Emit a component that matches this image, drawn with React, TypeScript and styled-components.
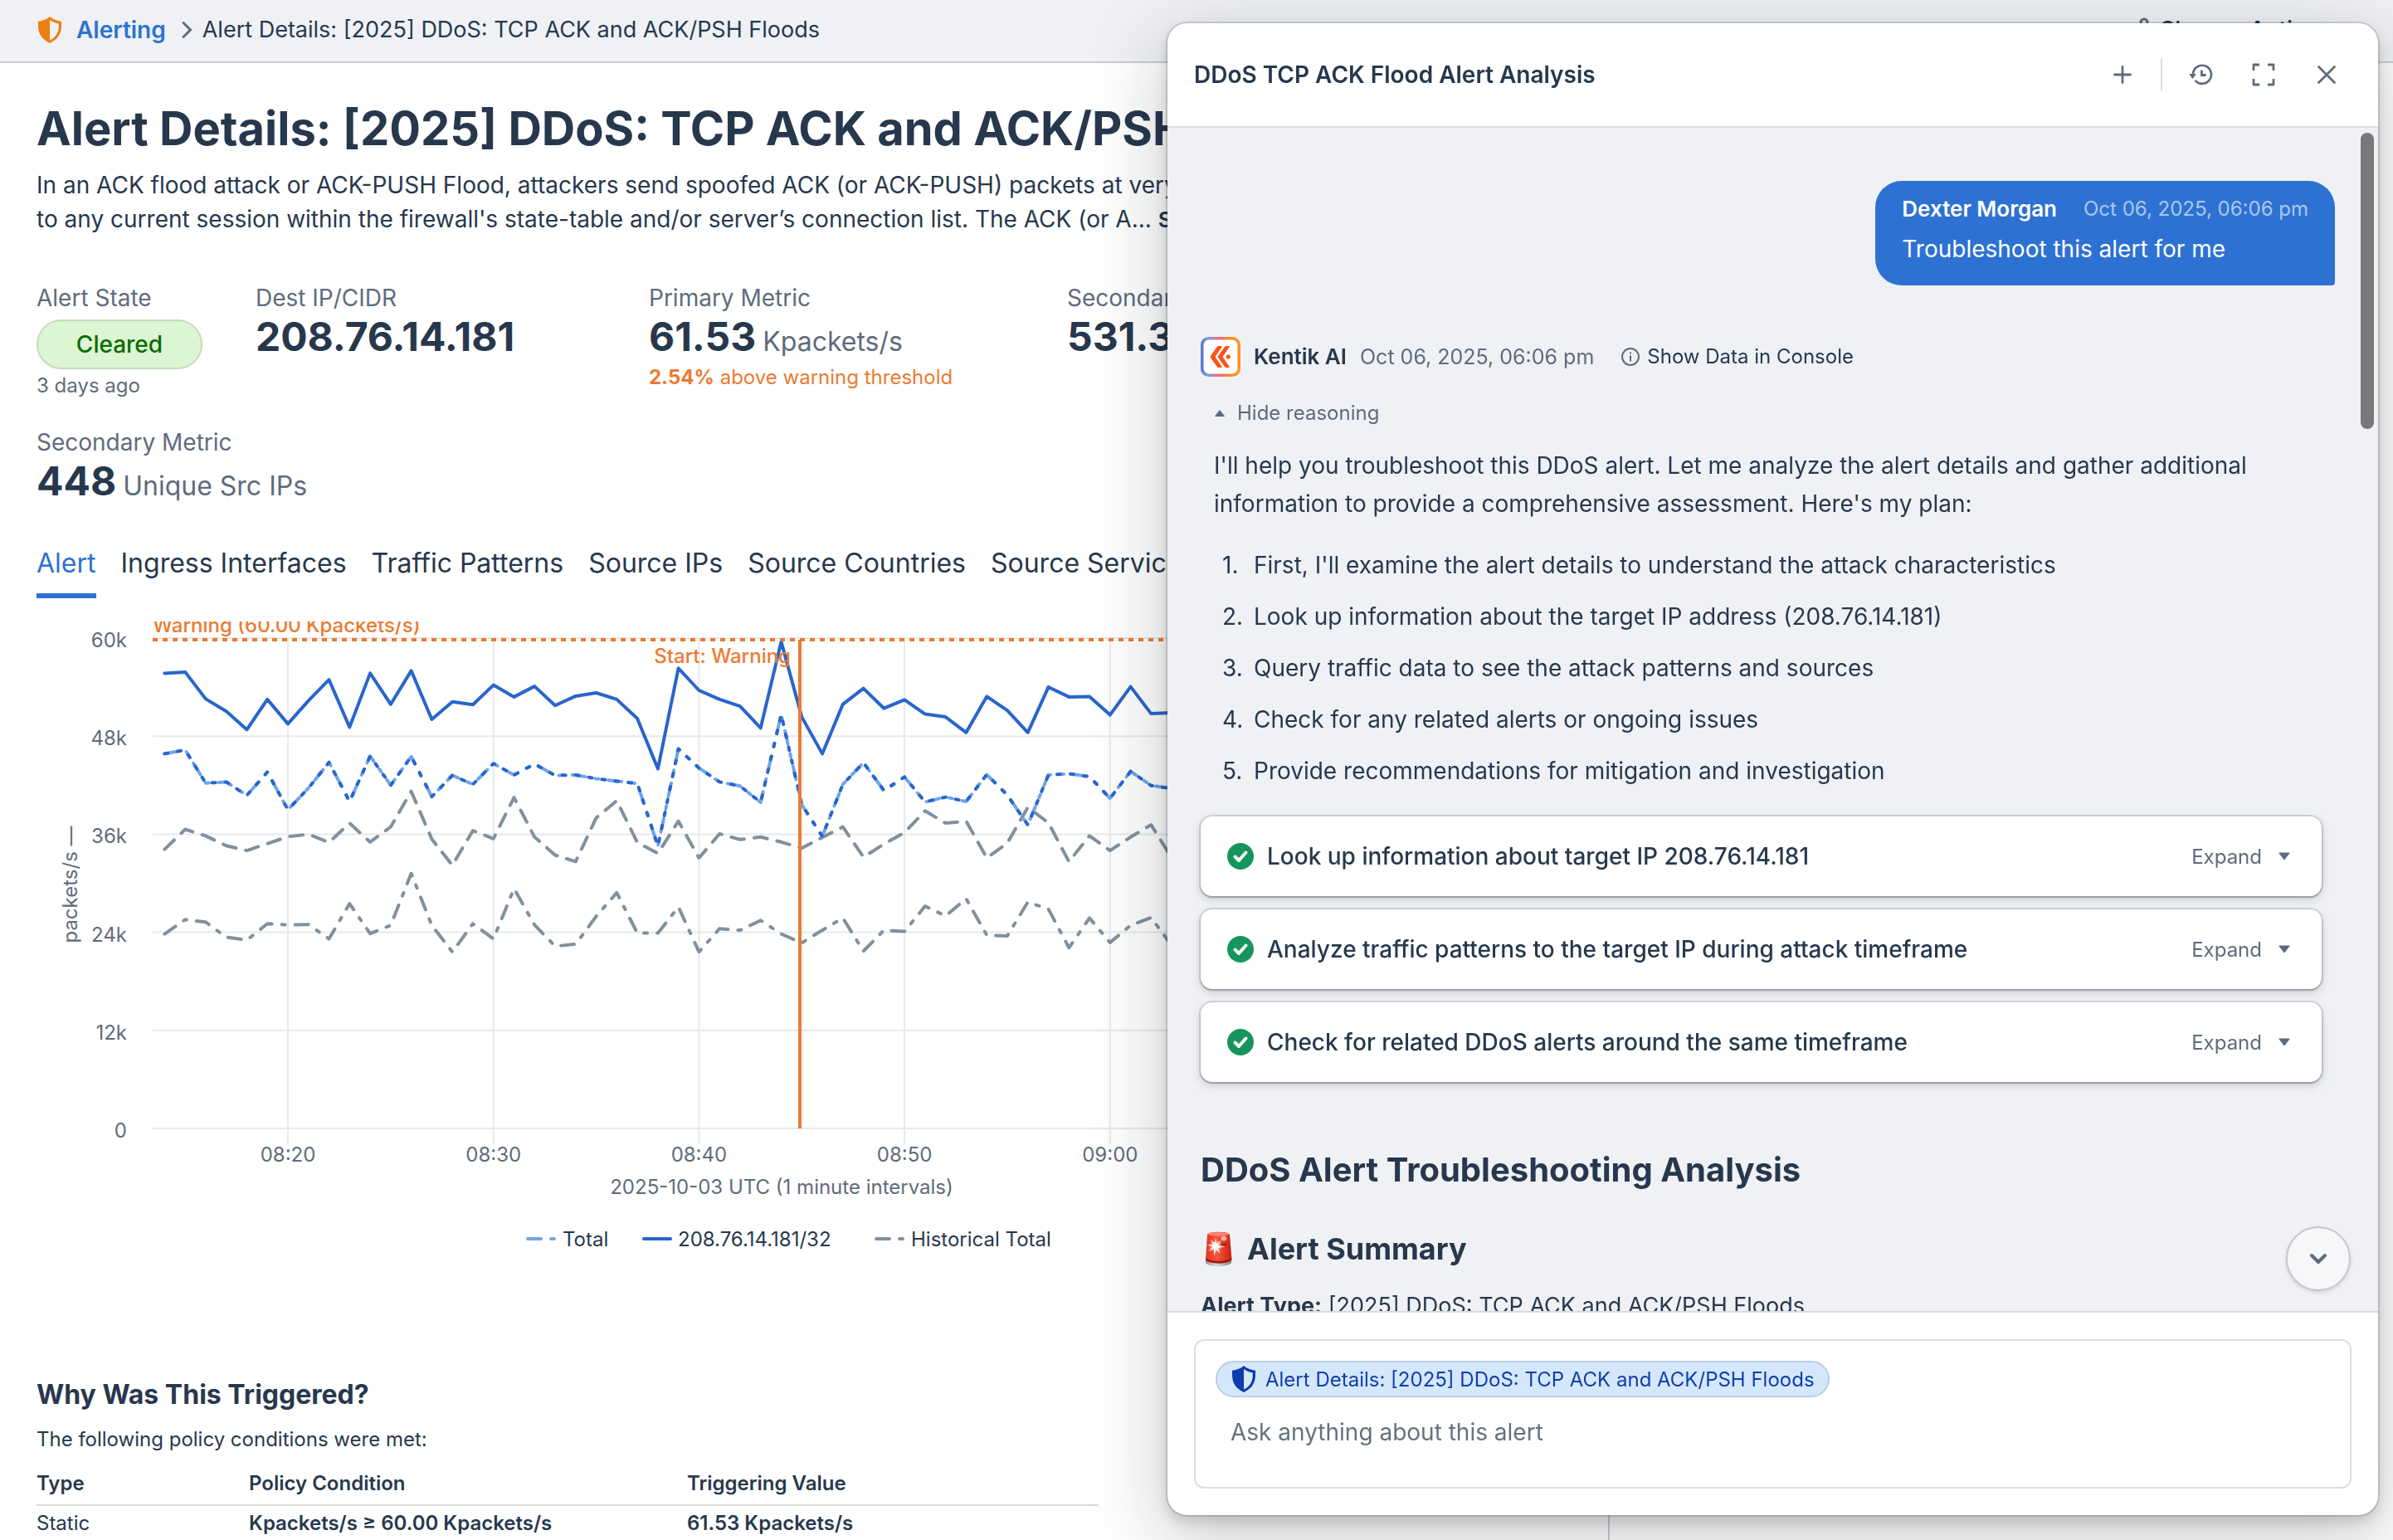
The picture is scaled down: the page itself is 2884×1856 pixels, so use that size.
import React from 'react';
import styled, { createGlobalStyle } from 'styled-components';

const ink = '#27384d';
const muted = '#5f6b7c';
const blue = '#2d72d2';
const orange = '#ec7a32';
const surface = '#eff1f5';
const sans = "Inter, Roboto, 'Liberation Sans', sans-serif";

const GlobalStyle = createGlobalStyle`
  *, *::before, *::after { box-sizing: border-box; }
  html, body { margin: 0; height: 100%; }
  body {
    background: #fff;
    color: ${ink};
    font-family: ${sans};
    font-size: 28px;
    overflow: hidden;
  }
  h1, h2, h3, p, ol, dl, dd { margin: 0; padding: 0; }
  button, textarea { font: inherit; color: inherit; }
`;

/* ---------- page ---------- */

const Page = styled.div`
  height: 100vh;
  display: flex;
  flex-direction: column;
  overflow: hidden;
`;

const TopBar = styled.header`
  display: flex;
  flex: none;
  align-items: center;
  justify-content: space-between;
  height: 76px;
  padding: 0 72px 2px 44px;
  background: ${surface};
  border-bottom: 2px solid #cdced5;
`;

const Crumbs = styled.nav`
  display: flex;
  align-items: center;
  line-height: 36px;
  svg { flex: none; }
`;

const CrumbLink = styled.a`
  margin: 0 18px 0 16px;
  color: ${blue};
  font-weight: 600;
  text-decoration: none;
`;

const Crumb = styled.span`
  margin-left: 12px;
  font-size: 27px;
`;

const TopActions = styled.div`
  display: flex;
  gap: 30px;
`;

const TopButton = styled.button`
  display: flex;
  align-items: center;
  gap: 8px;
  padding: 0;
  border: 0;
  background: none;
  font-weight: 500;
  line-height: 36px;
`;

const Columns = styled.div`
  display: flex;
  flex: 1;
  min-height: 0;
`;

const Main = styled.main`
  flex: 0 0 1940px;
  padding: 45px 44px 0;
  overflow: hidden;
  border-right: 2px solid #cdced5;
`;

const Title = styled.h1`
  font-size: 56px;
  line-height: 68px;
  font-weight: 700;
  white-space: nowrap;
`;

const Description = styled.p`
  margin-top: 14px;
  line-height: 41px;
  white-space: nowrap;
`;

const ShowMore = styled.button`
  padding: 0;
  border: 0;
  background: none;
  font-size: 26px;
  font-weight: 600;
`;

/* ---------- stats ---------- */

const Stats = styled.dl`
  display: grid;
  grid-template-columns: 264px 474px 504px 1fr;
  row-gap: 34px;
  margin-top: 56px;
`;

const StatLabel = styled.dt`
  line-height: 36px;
  color: ${muted};
`;

const StatValue = styled.dd`
  font-size: 48px;
  line-height: 58px;
  font-weight: 700;
  white-space: nowrap;
`;

const Unit = styled.span`
  margin-left: 8px;
  font-size: 32px;
  line-height: 32px;
  font-weight: 400;
  color: ${muted};
`;

const StatNote = styled.dd<{ $tone?: string }>`
  margin-top: 4px;
  font-size: 24px;
  line-height: 32px;
  color: ${(p) => p.$tone ?? muted};
`;

const Pill = styled.dd`
  display: flex;
  align-items: center;
  justify-content: center;
  width: 200px;
  height: 60px;
  margin-top: 8px;
  border: 2px solid #c5dcba;
  border-radius: 30px;
  background: #dcf5d3;
  color: #0b6b03;
  font-weight: 500;
`;

/* ---------- tabs ---------- */

const Tabs = styled.div`
  display: flex;
  gap: 30px;
  margin-top: 50px;
`;

const Tab = styled.button<{ $active?: boolean }>`
  flex: none;
  padding: 0 0 16px;
  border: 0;
  border-bottom: 6px solid ${(p) => (p.$active ? blue : 'transparent')};
  background: none;
  color: ${(p) => (p.$active ? blue : ink)};
  font-size: 32px;
  line-height: 40px;
  white-space: nowrap;
`;

const ChartBox = styled.figure`
  margin: 28px 0 0;
  overflow: hidden;
  svg { display: block; }
  text { font-family: ${sans}; font-size: 24px; fill: ${muted}; }
  .note { fill: ${orange}; font-weight: 500; }
  .key { fill: ${ink}; }
`;

/* ---------- triggers ---------- */

const SectionTitle = styled.h2`
  margin-top: 142px;
  font-size: 32px;
  line-height: 40px;
  font-weight: 700;
`;

const SectionText = styled.p`
  margin-top: 18px;
  font-size: 24px;
  line-height: 32px;
`;

const Table = styled.table`
  width: 1280px;
  margin-top: 12px;
  border-collapse: collapse;
  table-layout: fixed;
  font-size: 24px;
  line-height: 32px;
  text-align: left;
  th { padding: 9px 0; font-weight: 600; border-bottom: 2px solid #d9dadc; }
  th:nth-child(1) { width: 256px; }
  th:nth-child(2) { width: 528px; }
  td { padding: 5px 0; font-weight: 600; }
  td:first-child { font-weight: 400; }
`;

/* ---------- assistant panel ---------- */

const Panel = styled.aside`
  position: fixed;
  top: 28px;
  right: 18px;
  bottom: 30px;
  width: 1459px;
  display: flex;
  flex-direction: column;
  overflow: hidden;
  border-radius: 24px;
  background: #fff;
  box-shadow: 0 0 0 2px rgba(17, 20, 24, 0.14), 0 8px 16px rgba(17, 20, 24, 0.16),
    0 28px 92px 8px rgba(17, 20, 24, 0.2);
`;

const PanelHeader = styled.header`
  display: flex;
  flex: none;
  align-items: center;
  justify-content: space-between;
  height: 126px;
  padding: 0 32px;
  border-bottom: 2px solid #dcdde0;
`;

const PanelTitle = styled.h2`
  font-size: 28px;
  line-height: 36px;
  font-weight: 600;
`;

const PanelTools = styled.div`
  display: flex;
  align-items: center;
  gap: 16px;
`;

const IconButton = styled.button`
  display: flex;
  align-items: center;
  justify-content: center;
  width: 60px;
  height: 60px;
  padding: 0;
  border: 0;
  background: none;
  color: ${muted};
`;

const ToolDivider = styled.span`
  width: 2px;
  height: 40px;
  background: #dcdfe4;
`;

const Chat = styled.div`
  position: relative;
  flex: 1;
  min-height: 0;
  overflow: hidden;
  padding: 64px 52px 0 40px;
  background: ${surface};
`;

const ScrollThumb = styled.div`
  position: absolute;
  top: 6px;
  right: 5px;
  width: 16px;
  height: 357px;
  border-radius: 8px;
  background: #777879;
`;

const ScrollDown = styled.button`
  position: absolute;
  right: 33px;
  bottom: 24px;
  display: flex;
  align-items: center;
  justify-content: center;
  width: 78px;
  height: 78px;
  padding: 0;
  border: 2px solid #c6c8cc;
  border-radius: 50%;
  background: #f6f7f9;
  color: ${muted};
  box-shadow: 0 2px 4px rgba(17, 20, 24, 0.12);
`;

const Bubble = styled.div`
  width: fit-content;
  margin-left: auto;
  padding: 16px 32px 22px;
  border-radius: 32px 32px 4px 32px;
  background: ${blue};
  color: #fff;
`;

const BubbleMeta = styled.div`
  display: flex;
  gap: 32px;
  font-size: 26px;
  line-height: 36px;
  font-weight: 600;
  time { font-size: 24px; font-weight: 400; color: rgba(255, 255, 255, 0.62); }
`;

const BubbleText = styled.p`
  margin-top: 8px;
  line-height: 44px;
`;

const Reply = styled.section`
  margin-top: 62px;
  padding-right: 16px;
`;

const ReplyMeta = styled.div`
  display: flex;
  align-items: center;
  gap: 16px;
  font-size: 26px;
  line-height: 36px;
  strong { font-weight: 600; }
  time { font-size: 25px; color: ${muted}; }
`;

const ConsoleButton = styled.button`
  display: flex;
  align-items: center;
  gap: 8px;
  margin-left: 16px;
  padding: 0;
  border: 0;
  background: none;
  font-size: 24px;
  line-height: 36px;
  svg { color: ${muted}; }
`;

const ReasonToggle = styled.button`
  display: flex;
  align-items: center;
  gap: 14px;
  margin: 28px 0 0 16px;
  padding: 0;
  border: 0;
  background: none;
  color: ${muted};
  font-size: 24px;
  line-height: 32px;
`;

const Prose = styled.p`
  margin: 24px 0 0 16px;
  line-height: 46px;
  white-space: nowrap;
`;

const Plan = styled.ol`
  display: grid;
  gap: 16px;
  margin-top: 28px;
  line-height: 46px;
  list-style: none;
  counter-reset: step;
`;

const PlanItem = styled.li`
  display: flex;
  padding-left: 26px;
  counter-increment: step;
  &::before {
    content: counter(step) '.';
    flex: 0 0 38px;
  }
`;

const Steps = styled.div`
  display: grid;
  gap: 16px;
  margin-top: 32px;
`;

const Step = styled.div`
  display: flex;
  align-items: center;
  height: 96px;
  padding: 0 38px 0 32px;
  border-radius: 14px;
  background: #fff;
  font-weight: 500;
  box-shadow: 0 0 0 2px rgba(17, 20, 24, 0.13), 0 2px 2px rgba(17, 20, 24, 0.2),
    0 4px 12px rgba(17, 20, 24, 0.16);
`;

const StepName = styled.span`
  flex: 1;
  margin-left: 16px;
`;

const ExpandButton = styled.button`
  display: flex;
  align-items: center;
  gap: 20px;
  padding: 0;
  border: 0;
  background: none;
  color: ${muted};
  font-size: 24px;
  font-weight: 400;
`;

const ReportTitle = styled.h2`
  margin-top: 82px;
  font-size: 40px;
  line-height: 48px;
  font-weight: 700;
`;

const ReportSection = styled.h3`
  display: flex;
  align-items: center;
  gap: 16px;
  margin-top: 49px;
  font-size: 36px;
  line-height: 44px;
  font-weight: 700;
`;

const ReportLine = styled.p`
  margin-top: 24px;
  font-size: 27px;
  line-height: 46px;
  strong { font-weight: 700; }
`;

const Footer = styled.footer`
  flex: none;
  padding: 32px;
  border-top: 2px solid #d9dadc;
`;

const Composer = styled.div`
  display: flex;
  flex-direction: column;
  align-items: flex-start;
  gap: 20px;
  height: 180px;
  padding: 24px;
  border: 2px solid #dcdddf;
  border-radius: 12px;
`;

const Chip = styled.span`
  display: flex;
  align-items: center;
  gap: 10px;
  height: 44px;
  padding: 0 16px;
  border: 2px solid #bacde2;
  border-radius: 22px;
  background: #d4e7fb;
  color: #0f3fae;
  font-size: 24px;
`;

const Prompt = styled.textarea`
  width: 100%;
  height: 44px;
  padding: 0 18px;
  border: 0;
  outline: 0;
  resize: none;
  overflow: hidden;
  background: none;
  line-height: 44px;
  &::placeholder { color: #667180; opacity: 1; }
`;

/* ---------- icons ---------- */

const ShieldIcon = ({ color }: { color: string }) => (
  <svg width="32" height="34" viewBox="0 0 32 34" aria-hidden="true">
    <path
      fillRule="evenodd"
      fill={color}
      d="M16 1C12.500 4.200 7.500 6.200 2 6.800V12C2 22 7 28.800 16 33C25 28.800 30 22 30 12V6.800C24.500 6.200 19.500 4.200 16 1ZM16 5C19 7.200 22.600 8.600 26.800 9.400V12C26.800 20.400 23.200 26 16 29.600Z"
    />
  </svg>
);

const ChevronRight = () => (
  <svg width="14" height="22" viewBox="0 0 14 22" fill="none" stroke={muted} strokeWidth="3" strokeLinecap="round" aria-hidden="true">
    <path d="M3 2.500L11.500 11L3 19.500" />
  </svg>
);

const UserIcon = () => (
  <svg width="22" height="30" viewBox="0 0 22 30" fill="none" stroke={muted} strokeWidth="3" aria-hidden="true">
    <circle cx="11" cy="6" r="4" />
    <path d="M2 28V24C2 19 6 16 11 16S20 19 20 24V28" />
  </svg>
);

const PlusIcon = () => (
  <svg width="24" height="24" viewBox="0 0 24 24" stroke="currentColor" strokeWidth="2.800" strokeLinecap="round" aria-hidden="true">
    <path d="M12 2.500V21.500M2.500 12H21.500" />
  </svg>
);

const HistoryIcon = () => (
  <svg width="30" height="28" viewBox="0 0 30 28" aria-hidden="true">
    <path d="M6 13A11 11 0 1 1 9.200 21.600" fill="none" stroke="currentColor" strokeWidth="2.600" strokeLinecap="round" />
    <path d="M2 13.500H9L5.500 18.500Z" fill="currentColor" stroke="currentColor" strokeLinejoin="round" />
    <path d="M16.500 8.500V14.500H21.500" fill="none" stroke="currentColor" strokeWidth="2.800" />
  </svg>
);

const ExpandIcon = () => (
  <svg width="28" height="28" viewBox="0 0 28 28" fill="none" stroke="currentColor" strokeWidth="2.800" strokeLinejoin="round" aria-hidden="true">
    <path d="M2 9V2H9M19 2H26V9M26 19V26H19M9 26H2V19" />
  </svg>
);

const CloseIcon = () => (
  <svg width="24" height="24" viewBox="0 0 24 24" stroke="currentColor" strokeWidth="2.800" strokeLinecap="round" aria-hidden="true">
    <path d="M2.500 2.500L21.500 21.500M21.500 2.500L2.500 21.500" />
  </svg>
);

const AssistantLogo = () => (
  <svg width="48" height="48" viewBox="0 0 48 48" aria-hidden="true">
    <defs>
      <linearGradient id="logo-ring" x1="0" y1="0" x2="1" y2="0">
        <stop offset="0" stopColor="#5b7bd0" />
        <stop offset="0.16" stopColor="#7aa6d6" />
        <stop offset="0.46" stopColor="#f0688c" />
        <stop offset="0.72" stopColor="#ff8a2b" />
        <stop offset="1" stopColor="#ff9226" />
      </linearGradient>
    </defs>
    <rect x="1.800" y="1.800" width="44.400" height="44.400" rx="8" fill="#fff" stroke="url(#logo-ring)" strokeWidth="3.600" />
    <g fill="#fc5219" stroke="#fc5219" strokeLinejoin="round">
      <path d="M20.500 11.500H25.500L17 24L25.500 36.500H20.500L11.800 24Z" />
      <path d="M29.800 11.500H34.500L26 24L34.500 36.500H29.800L21 24Z" />
      <circle cx="33.300" cy="24" r="2.200" />
    </g>
  </svg>
);

const InfoIcon = () => (
  <svg width="24" height="24" viewBox="0 0 24 24" fill="none" stroke="currentColor" strokeWidth="2" aria-hidden="true">
    <circle cx="12" cy="12" r="10" />
    <path d="M12 10.500V17.500M12 6.500V8.500" />
  </svg>
);

const Caret = ({ up }: { up?: boolean }) => (
  <svg width="14" height="10" viewBox="0 0 14 10" fill={muted} stroke={muted} strokeLinejoin="round" aria-hidden="true">
    <path d={up ? 'M1.500 8.500L7 1.500L12.500 8.500Z' : 'M0.800 1L7 9L13.200 1Z'} />
  </svg>
);

const TickIcon = () => (
  <svg width="32" height="32" viewBox="0 0 32 32" aria-hidden="true">
    <circle cx="16" cy="16" r="16" fill="#15955c" />
    <path d="M9.500 16.500L14 21L22.500 11.500" fill="none" stroke="#fff" strokeWidth="4" strokeLinecap="round" strokeLinejoin="round" />
  </svg>
);

const ChevronDown = () => (
  <svg width="22" height="16" viewBox="0 0 22 16" fill="none" stroke="currentColor" strokeWidth="4" strokeLinecap="round" strokeLinejoin="round" aria-hidden="true">
    <path d="M3 4L11 12L19 4" />
  </svg>
);

const SirenIcon = () => (
  <svg width="40" height="44" viewBox="0 0 40 44" aria-hidden="true">
    <defs>
      <linearGradient id="siren-glass" x1="0" y1="0" x2="1" y2="0">
        <stop offset="0" stopColor="#e2361f" />
        <stop offset="0.45" stopColor="#f4553c" />
        <stop offset="1" stopColor="#c81f0f" />
      </linearGradient>
      <linearGradient id="siren-base" x1="0" y1="0" x2="1" y2="0">
        <stop offset="0" stopColor="#8d8f8f" />
        <stop offset="0.4" stopColor="#d9dcdb" />
        <stop offset="1" stopColor="#858787" />
      </linearGradient>
      <radialGradient id="siren-glow">
        <stop offset="0" stopColor="#fff" />
        <stop offset="0.4" stopColor="#ffd2cc" stopOpacity="0.8" />
        <stop offset="1" stopColor="#ff8475" stopOpacity="0" />
      </radialGradient>
    </defs>
    <path d="M6 34H37V39C33 44.500 10 44.500 6 39Z" fill="url(#siren-base)" />
    <path d="M8 5C9 0.500 34 0.500 35 5L37.500 35C33 40.500 11 40.500 6 35Z" fill="url(#siren-glass)" />
    <path d="M6.500 33C12 38 32 38 37 33L37.500 35.500C33 41 11 41 6 35.500Z" fill="#a3160b" />
    <ellipse cx="21.500" cy="4.500" rx="12.500" ry="2.200" fill="#ff9485" opacity="0.8" />
    <ellipse cx="28" cy="9.500" rx="3.500" ry="3" fill="#ffc2bb" opacity="0.8" />
    <path d="M21 16L32 15L30 20Z" fill="#9d1a10" opacity="0.7" />
    <circle cx="18" cy="19" r="9" fill="url(#siren-glow)" />
    <path d="M18 8L19.400 16L25 12L21 18L30 19.500L21 21L24 28L18.800 23L16 31L16 22L9 25L14.500 19.500L7 17L15 17L12 11L17 15.500Z" fill="#fff" opacity="0.85" />
  </svg>
);

/* ---------- chart ---------- */

const current = [
  55.7, 55.85, 52.55, 51.05, 48.8, 52.5, 49.5, 52.35, 54.9, 49.1, 55.7, 51.9, 56, 50.05, 52.2, 51.85, 54.25, 52.8, 54.1,
  51.75, 52.9, 53.3, 52.5, 50.15, 44, 56.3, 53.6, 52.5, 51.65, 49, 59.55, 50.35, 45.85, 51.9, 53.85, 51.4, 52.45, 50.7,
  50.35, 48.45, 52.85, 51.15, 48.45, 54, 52.8, 52.85, 50.6, 54.05, 50.75, 50.85,
];
const total = [
  45.85, 46.3, 42.25, 42.4, 40.75, 43.6, 39, 41.65, 44.8, 40, 45.55, 42, 45.5, 40.6, 43.2, 42.1, 44.65, 43.25, 44.6, 43.2,
  43.25, 42.8, 42.5, 42.2, 34.55, 46.45, 44.1, 42.4, 41.9, 39.9, 50.65, 39.6, 35.75, 42.1, 44.75, 41.35, 43, 39.95, 40.55,
  40, 43.3, 40.8, 37.15, 43.25, 43.4, 43.05, 40.4, 43.7, 41.95, 41.6,
];
const pastHigh = [
  34.15, 36.6, 35.8, 34.6, 34, 34.85, 35.7, 36, 35, 37.35, 35.05, 36.9, 41.25, 35.4, 32.2, 36.45, 35.45, 40.5, 35.65,
  33.45, 32.65, 38, 40.1, 35, 33.65, 37.6, 33.1, 36.05, 35.35, 35.65, 35.05, 34.3, 35.6, 36.9, 33.2, 34.8, 36.2, 38.85,
  37.35, 37.6, 33.1, 34.9, 39.3, 37.4, 32.65, 35.8, 34, 35.65, 37.15, 33.1,
];
const pastLow = [
  23.8, 25.55, 25.25, 23.4, 23.05, 25.05, 24.9, 24.95, 23.2, 27.5, 23.85, 24.85, 31.2, 24.85, 21.6, 25.05, 23.2, 29.35,
  24.9, 22.3, 22.55, 25.95, 28.85, 23.9, 23.9, 27.1, 21.6, 24.45, 24.25, 25.45, 23.8, 22.7, 24.25, 25.75, 21.7, 24.25,
  24.1, 27.2, 26, 28.1, 23.65, 23.55, 27.7, 26.85, 22.1, 25.75, 22.75, 24.85, 25.8, 22.4,
];

const minuteX = (minute: number) => 303 + (minute - 20) * 24.77;
const valueY = (k: number) => 611 - k * 9.85;
const line = (values: number[]) =>
  values.map((v, i) => `${minuteX(14 + i).toFixed(1)},${valueY(v).toFixed(1)}`).join(' ');

const TrafficChart = () => (
  <ChartBox>
    <svg width="1656" height="770" viewBox="0 0 1656 770" role="img" aria-label="Packets per second by minute">
      <g stroke="#e8e9eb" strokeWidth="2">
        {[0, 12, 24, 36, 48, 60].map((k) => (
          <line key={k} x1="140" x2="1656" y1={valueY(k)} y2={valueY(k)} />
        ))}
        {[20, 30, 40, 50, 60, 70].map((m) => (
          <line key={m} x1={minuteX(m)} x2={minuteX(m)} y1="21" y2="630" />
        ))}
      </g>
      {[0, 12, 24, 36, 48, 60].map((k) => (
        <text key={k} x="109" y={valueY(k) + 11} textAnchor="end">{k ? `${k}k` : '0'}</text>
      ))}
      {['08:20', '08:30', '08:40', '08:50', '09:00'].map((t, i) => (
        <text key={t} x={minuteX(20 + i * 10)} y="651" textAnchor="middle">{t}</text>
      ))}
      <text transform="translate(49 317) rotate(-90)" textAnchor="middle">packets/s —</text>
      <text x="898" y="690" textAnchor="middle">2025-10-03 UTC (1 minute intervals)</text>

      <g fill="none" strokeWidth="4" strokeLinecap="round" strokeLinejoin="round">
        <polyline points={line(pastHigh)} stroke="#82909d" strokeDasharray="16 12" />
        <polyline points={line(pastLow)} stroke="#82909d" strokeDasharray="16 12 4 12" />
        <polyline points={line(total)} stroke="#6fa5ea" strokeDasharray="16 12 4 12" />
        <polyline points={line(total)} stroke="#2965cc" strokeDasharray="4 12" />
        <polyline points={line(current)} stroke="#2965cc" />
      </g>

      <line x1="140" x2="1656" y1="22" y2="22" stroke={orange} strokeWidth="4" strokeDasharray="6 6" />
      <line x1="920" x2="920" y1="22" y2="611" stroke={orange} strokeWidth="4" />
      <text className="note" x="140" y="13">Warning (60.00 Kpackets/s)</text>
      <text className="note" x="909" y="50" textAnchor="end">Start: Warning</text>

      <g strokeWidth="4" strokeLinecap="round">
        <path d="M592 744H608M620 744H624" stroke="#6fa5ea" />
        <path d="M732 744H764" stroke="#2965cc" />
        <path d="M1012 744H1028M1040 744H1044" stroke="#82909d" />
      </g>
      <text className="key" x="634" y="753">Total</text>
      <text className="key" x="773" y="753">208.76.14.181/32</text>
      <text className="key" x="1054" y="753">Historical Total</text>
    </svg>
  </ChartBox>
);

/* ---------- content ---------- */

const alertName = '[2025] DDoS: TCP ACK and ACK/PSH Floods';

const tabs = [
  'Alert', 'Ingress Interfaces', 'Traffic Patterns', 'Source IPs', 'Source Countries', 'Source Services',
];

const plan = [
  "First, I'll examine the alert details to understand the attack characteristics",
  'Look up information about the target IP address (208.76.14.181)',
  'Query traffic data to see the attack patterns and sources',
  'Check for any related alerts or ongoing issues',
  'Provide recommendations for mitigation and investigation',
];

const steps = [
  'Look up information about target IP 208.76.14.181',
  'Analyze traffic patterns to the target IP during attack timeframe',
  'Check for related DDoS alerts around the same timeframe',
];

export default function App() {
  return (
    <>
      <GlobalStyle />
      <Page>
        <TopBar>
          <Crumbs aria-label="Breadcrumb">
            <ShieldIcon color="#ee7f11" />
            <CrumbLink href="#alerting">Alerting</CrumbLink>
            <ChevronRight />
            <Crumb>Alert Details: {alertName}</Crumb>
          </Crumbs>
          <TopActions>
            <TopButton type="button"><UserIcon />Share</TopButton>
            <TopButton type="button">Actions</TopButton>
          </TopActions>
        </TopBar>
        <Columns>
          <Main>
            <Title>Alert Details: {alertName}</Title>
            <Description>
              In an ACK flood attack or ACK-PUSH Flood, attackers send spoofed ACK (or ACK-PUSH) packets at very high
              <br />
              to any current session within the firewall's state-table and/or server’s connection list. The ACK (or A...{' '}
              <ShowMore type="button">Show more</ShowMore>
            </Description>

            <Stats>
              <div>
                <StatLabel>Alert State</StatLabel>
                <Pill>Cleared</Pill>
                <StatNote>3 days ago</StatNote>
              </div>
              <div>
                <StatLabel>Dest IP/CIDR</StatLabel>
                <StatValue>208.76.14.181</StatValue>
              </div>
              <div>
                <StatLabel>Primary Metric</StatLabel>
                <StatValue>61.53<Unit>Kpackets/s</Unit></StatValue>
                <StatNote $tone={orange}><b>2.54%</b> above warning threshold</StatNote>
              </div>
              <div>
                <StatLabel>Secondary Metric</StatLabel>
                <StatValue>531.34</StatValue>
              </div>
              <div>
                <StatLabel>Secondary Metric</StatLabel>
                <StatValue>448<Unit>Unique Src IPs</Unit></StatValue>
              </div>
            </Stats>

            <Tabs role="tablist">
              {tabs.map((name, i) => (
                <Tab key={name} type="button" role="tab" aria-selected={i === 0} $active={i === 0}>{name}</Tab>
              ))}
            </Tabs>
            <TrafficChart />

            <SectionTitle>Why Was This Triggered?</SectionTitle>
            <SectionText>The following policy conditions were met:</SectionText>
            <Table>
              <thead>
                <tr><th>Type</th><th>Policy Condition</th><th>Triggering Value</th></tr>
              </thead>
              <tbody>
                <tr><td>Static</td><td>Kpackets/s ≥ 60.00 Kpackets/s</td><td>61.53 Kpackets/s</td></tr>
              </tbody>
            </Table>
          </Main>
        </Columns>
      </Page>

      <Panel aria-label="Alert assistant">
        <PanelHeader>
          <PanelTitle>DDoS TCP ACK Flood Alert Analysis</PanelTitle>
          <PanelTools>
            <IconButton type="button" aria-label="New chat"><PlusIcon /></IconButton>
            <ToolDivider />
            <IconButton type="button" aria-label="History"><HistoryIcon /></IconButton>
            <IconButton type="button" aria-label="Full screen"><ExpandIcon /></IconButton>
            <IconButton type="button" aria-label="Close"><CloseIcon /></IconButton>
          </PanelTools>
        </PanelHeader>

        <Chat>
          <Bubble>
            <BubbleMeta>Dexter Morgan<time>Oct 06, 2025, 06:06 pm</time></BubbleMeta>
            <BubbleText>Troubleshoot this alert for me</BubbleText>
          </Bubble>

          <Reply>
            <ReplyMeta>
              <AssistantLogo />
              <strong>Kentik AI</strong>
              <time>Oct 06, 2025, 06:06 pm</time>
              <ConsoleButton type="button"><InfoIcon />Show Data in Console</ConsoleButton>
            </ReplyMeta>
            <ReasonToggle type="button"><Caret up />Hide reasoning</ReasonToggle>
            <Prose>
              I'll help you troubleshoot this DDoS alert. Let me analyze the alert details and gather additional
              <br />
              information to provide a comprehensive assessment. Here's my plan:
            </Prose>
            <Plan>
              {plan.map((item) => <PlanItem key={item}>{item}</PlanItem>)}
            </Plan>
            <Steps>
              {steps.map((name) => (
                <Step key={name}>
                  <TickIcon />
                  <StepName>{name}</StepName>
                  <ExpandButton type="button">Expand<Caret /></ExpandButton>
                </Step>
              ))}
            </Steps>
            <ReportTitle>DDoS Alert Troubleshooting Analysis</ReportTitle>
            <ReportSection><SirenIcon />Alert Summary</ReportSection>
            <ReportLine><strong>Alert Type:</strong> {alertName}</ReportLine>
          </Reply>

          <ScrollThumb />
          <ScrollDown type="button" aria-label="Scroll to latest"><ChevronDown /></ScrollDown>
        </Chat>

        <Footer>
          <Composer>
            <Chip><ShieldIcon color="#0d3cab" />Alert Details: {alertName}</Chip>
            <Prompt aria-label="Message" placeholder="Ask anything about this alert" />
          </Composer>
        </Footer>
      </Panel>
    </>
  );
}
